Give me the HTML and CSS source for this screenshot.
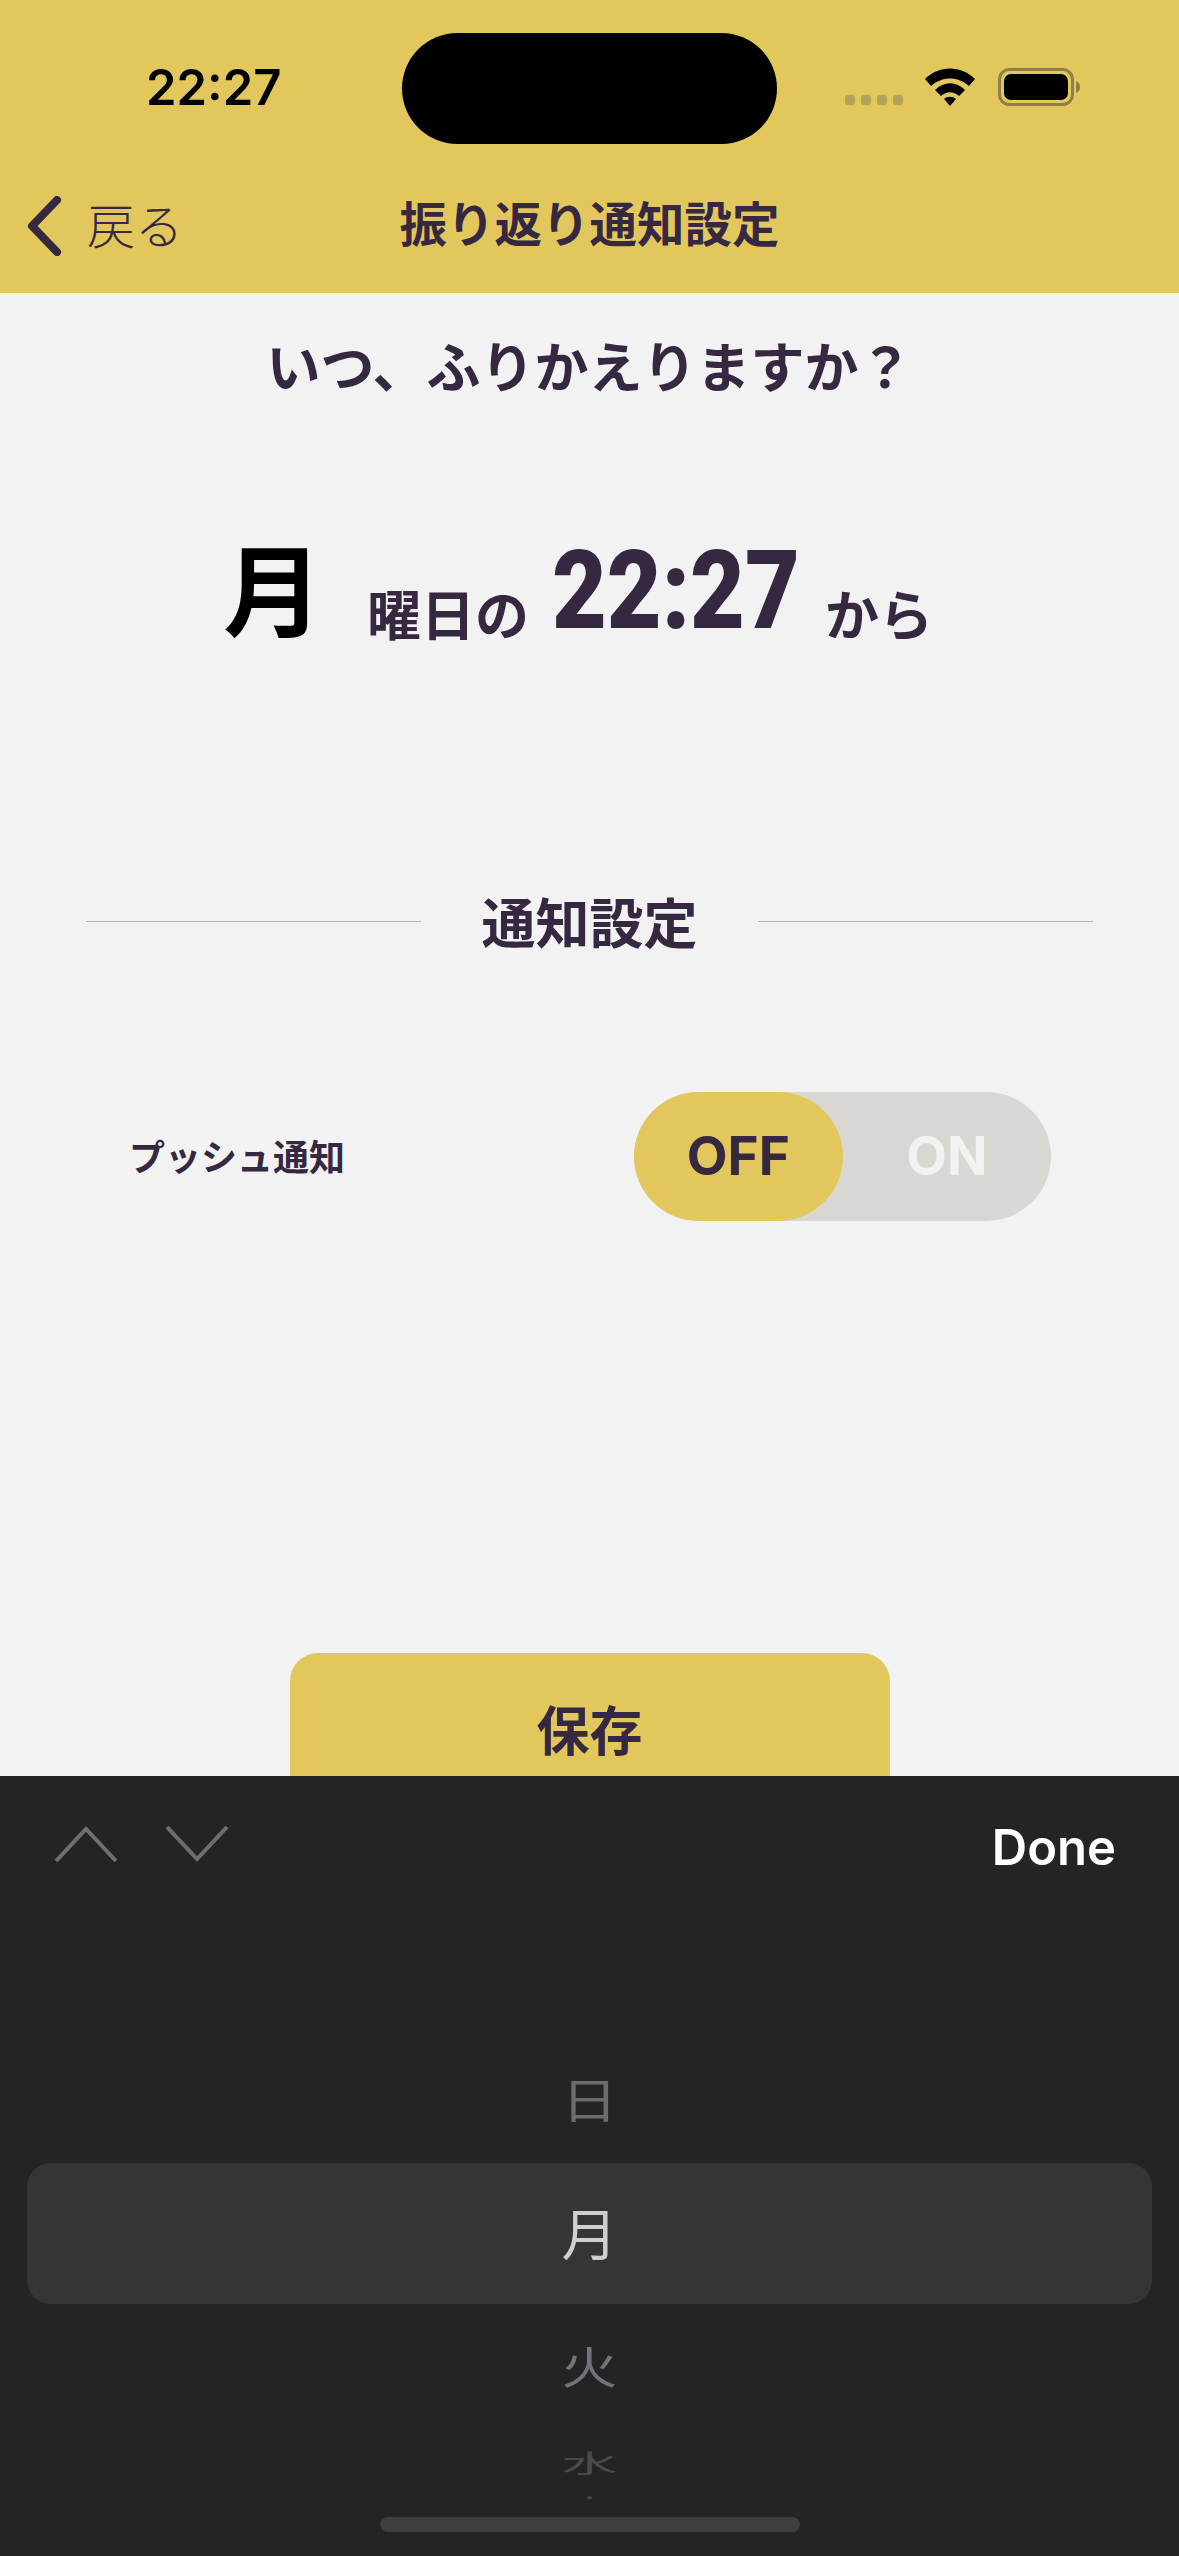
FILE: index.html
```html
<!DOCTYPE html>
<html lang="ja">
<head>
    <meta charset="UTF-8">
    <meta name="viewport" content="width=device-width, initial-scale=1.0">
    <title>振り返り通知設定</title>
    <link rel="stylesheet" href="styles.css">
</head>
<body>
    <div class="screen">
        <header class="top">
            <div class="status-bar">
                <span class="clock">22:27</span>
                <div class="island"></div>
                <div class="status-icons">
                    <div class="signal"><i></i><i></i><i></i><i></i></div>
                    <svg class="wifi" width="50" height="38" viewBox="0 0 50 38">
                        <path d="M0 11 C14 -3 36 -3 50 11 L44 18 C33 8 17 8 6 18 Z M10 22 C19 13 31 13 40 22 L34 28 C28 23 22 23 16 28 Z M19 31 C22 28 28 28 31 31 L25 38 Z" fill="#000"/>
                    </svg>
                    <svg class="battery" width="82" height="38" viewBox="0 0 82 38">
                        <rect x="1.5" y="1.5" width="73" height="35" rx="10" fill="none" stroke="#8f7f4a" stroke-width="3"/>
                        <rect x="6" y="6" width="64" height="26" rx="7" fill="#000"/>
                        <path d="M78 13 C81 14 82 16 82 19 C82 22 81 24 78 25 Z" fill="#8f7f4a"/>
                    </svg>
                </div>
            </div>
            <nav class="nav-bar">
                <div class="back">
                    <svg width="36" height="60" viewBox="0 0 36 60">
                        <path d="M31 4 L6 30 L31 56" fill="none" stroke="#352840" stroke-width="8" stroke-linecap="round" stroke-linejoin="round"/>
                    </svg>
                    <span class="back-label">戻る</span>
                </div>
                <h1 class="nav-title">振り返り通知設定</h1>
            </nav>
        </header>

        <main class="content">
            <h2 class="question">いつ、ふりかえりますか？</h2>
            <div class="schedule">
                <span class="day">月</span>
                <span class="unit unit-day">曜日の</span>
                <span class="time">22:27</span>
                <span class="unit">から</span>
            </div>
            <div class="section-head">
                <span class="line"></span>
                <h3>通知設定</h3>
                <span class="line"></span>
            </div>
            <div class="push-row">
                <span class="push-label">プッシュ通知</span>
                <div class="toggle">
                    <span class="toggle-item active">OFF</span>
                    <span class="toggle-item">ON</span>
                </div>
            </div>
            <button class="save">保存</button>
        </main>

        <section class="sheet">
            <div class="toolbar">
                <div class="arrows">
                    <svg width="64" height="36" viewBox="0 0 64 36">
                        <path d="M2 35 L32 3 L62 35" fill="none" stroke="#6f6c72" stroke-width="4"/>
                    </svg>
                    <svg width="64" height="36" viewBox="0 0 64 36">
                        <path d="M2 1 L32 33 L62 1" fill="none" stroke="#6f6c72" stroke-width="4"/>
                    </svg>
                </div>
                <span class="done">Done</span>
            </div>
            <div class="picker">
                <div class="pick pick-prev">日</div>
                <div class="pick-selected">月</div>
                <div class="pick pick-next">火</div>
                <div class="pick pick-far">水</div>
                <div class="pick pick-edge">木</div>
            </div>
            <div class="home-bar"></div>
        </section>
    </div>
</body>
</html>
```

FILE: styles.css
```css
* {
    box-sizing: border-box;
}
html, body {
    margin: 0;
    padding: 0;
}
body {
    font-family: "Noto Sans CJK JP", "Inter", sans-serif;
    color: #352840;
    background-color: #f2f2f2;
}
.screen {
    width: 1179px;
    height: 2556px;
    display: flex;
    flex-direction: column;
    overflow: hidden;
}

/* header */
.top {
    height: 293px;
    background-color: #e2c85c;
    flex-shrink: 0;
}
.status-bar {
    height: 144px;
    padding-top: 33px;
    display: flex;
}
.clock {
    font-family: "Inter", sans-serif;
    font-weight: 600;
    font-size: 49px;
    color: #000;
    width: 402px;
    padding-left: 146px;
    line-height: 110px;
}
.island {
    width: 375px;
    height: 111px;
    border-radius: 56px;
    background-color: #000;
}
.status-icons {
    margin-left: 68px;
    padding-top: 35px;
    display: flex;
    align-items: flex-start;
}
.signal {
    display: flex;
    gap: 6px;
    margin-top: 27px;
    margin-right: 22px;
}
.signal i {
    width: 10px;
    height: 10px;
    border-radius: 3px;
    background-color: #b5a25a;
}
.wifi {
    margin-right: 23px;
}
.nav-bar {
    height: 149px;
    padding-top: 7px;
    display: flex;
    align-items: center;
    justify-content: center;
    position: relative;
}
.back {
    position: absolute;
    left: 26px;
    top: 52px;
    display: flex;
    align-items: flex-start;
    gap: 25px;
    font-size: 48px;
    font-weight: 300;
}
.back-label {
    line-height: 54px;
}
.nav-title {
    margin: 0;
    font-size: 47.5px;
    font-weight: 700;
    line-height: 66px;
}

/* main content */
.content {
    flex: 1;
    min-height: 0;
    overflow: hidden;
    display: flex;
    flex-direction: column;
    align-items: center;
}
.question {
    margin: 33px 0 0;
    font-size: 54px;
    font-weight: 700;
    line-height: 78px;
}
.schedule {
    width: 100%;
    height: 120px;
    margin-top: 132px;
    padding-left: 223px;
    display: flex;
    align-items: flex-start;
    flex-shrink: 0;
}
.day {
    font-size: 100px;
    font-weight: 700;
    line-height: 100px;
    color: #000;
    width: 144px;
}
.unit {
    margin-top: 27px;
    font-size: 54px;
    font-weight: 700;
    line-height: 100px;
}
.unit-day {
    width: 185px;
}
.time {
    margin-top: 5px;
    font-family: "Roboto", sans-serif;
    font-size: 110px;
    font-weight: 900;
    line-height: 100px;
    width: 273px;
    transform: scaleX(0.86);
    transform-origin: left center;
}
.section-head {
    width: 100%;
    margin-top: 226px;
    padding: 0 86px;
    display: flex;
    align-items: center;
    flex-shrink: 0;
}
.section-head h3 {
    margin: 0;
    width: 337px;
    text-align: center;
    font-size: 54px;
    font-weight: 700;
    line-height: 78px;
}
.line {
    flex: 1;
    height: 1px;
    background-color: #b5b5b5;
}
.push-row {
    width: 100%;
    margin-top: 132px;
    padding: 0 128px 0 129px;
    display: flex;
    align-items: center;
    justify-content: space-between;
    flex-shrink: 0;
}
.push-label {
    font-size: 36px;
    font-weight: 700;
    padding-bottom: 3px;
}
.toggle {
    width: 417px;
    height: 129px;
    border-radius: 65px;
    background-color: #d8d7d4;
    display: flex;
}
.toggle-item {
    width: 209px;
    border-radius: 65px;
    font-family: "Inter", sans-serif;
    font-size: 53px;
    font-weight: 700;
    line-height: 129px;
    text-align: center;
    color: #f2f2f2;
}
.toggle-item.active {
    background-color: #e2c85c;
    color: #352840;
}
.save {
    margin-top: 432px;
    flex-shrink: 0;
    width: 600px;
    height: 170px;
    padding: 0 0 20px;
    border: none;
    border-radius: 28px;
    background-color: #e2c85c;
    color: #352840;
    font-family: inherit;
    font-size: 53px;
    font-weight: 700;
}

/* picker sheet */
.sheet {
    height: 780px;
    flex-shrink: 0;
    background-color: #242424;
    display: flex;
    flex-direction: column;
    position: relative;
}
.toolbar {
    height: 119px;
    padding: 50px 63px 0 54px;
    display: flex;
    justify-content: space-between;
    align-items: flex-start;
}
.arrows {
    display: flex;
    gap: 47px;
}
.done {
    font-family: "Inter", sans-serif;
    font-size: 49px;
    font-weight: 600;
    color: #fff;
    line-height: 50px;
    margin-top: -3px;
}
.picker {
    height: 437px;
    padding: 0 27px;
    margin-top: 167px;
    overflow: hidden;
    text-align: center;
}
.pick {
    font-size: 56px;
    height: 72px;
    line-height: 72px;
}
.pick-prev {
    margin-bottom: 29px;
    color: #6e6a70;
    transform: scaleY(0.85);
}
.pick-selected {
    height: 141px;
    border-radius: 24px;
    background-color: #353535;
    color: #d0ced2;
    font-size: 56px;
    line-height: 135px;
}
.pick-next {
    margin-top: 25px;
    color: #77727a;
    transform: scaleY(0.8);
}
.pick-far {
    height: 50px;
    margin-top: 36px;
    line-height: 50px;
    color: #4d4a4e;
    transform: scaleY(0.45);
}
.pick-edge {
    height: 50px;
    margin-top: -6px;
    line-height: 50px;
    color: #4d4a4e;
    transform: scaleY(0.4);
}
.home-bar {
    position: absolute;
    left: 380px;
    top: 741px;
    width: 420px;
    height: 15px;
    border-radius: 8px;
    background-color: #3e3d3f;
}
```
